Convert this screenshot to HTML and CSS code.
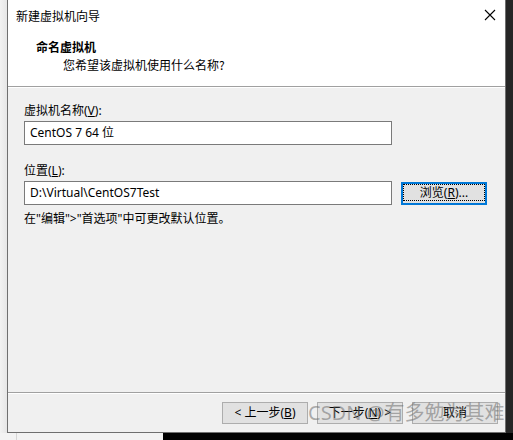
FILE: index.html
```html
<!DOCTYPE html>
<html lang="zh-CN">
<head>
    <meta charset="UTF-8">
    <title>新建虚拟机向导</title>
    <link rel="stylesheet" href="styles.css">
</head>
<body>
    <div class="desktop">
        <div class="main-row">
            <div class="gutter-left"></div>
            <div class="dialog">
                <div class="titlebar">
                    <span class="title">新建虚拟机向导</span>
                    <svg class="close" width="12" height="12" viewBox="0 0 12 12">
                        <path d="M1 1 L11 11 M11 1 L1 11" stroke="#000" stroke-width="1.1" fill="none"/>
                    </svg>
                </div>
                <div class="header">
                    <div class="step-title">命名虚拟机</div>
                    <div class="step-desc">您希望该虚拟机使用什么名称?</div>
                </div>
                <div class="content">
                    <div class="label">虚拟机名称(<u>V</u>):</div>
                    <div class="input">CentOS 7 64 位</div>
                    <div class="label label-gap">位置(<u>L</u>):</div>
                    <div class="row">
                        <div class="input">D:\Virtual\CentOS7Test</div>
                        <div class="btn btn-focus"><span class="focus-ring">浏览(<u>R</u>)...</span></div>
                    </div>
                    <div class="note">在"编辑"&gt;"首选项"中可更改默认位置。</div>
                </div>
                <div class="footer">
                    <div class="btn">&lt; 上一步(<u>B</u>)</div>
                    <div class="btn">下一步(<u>N</u>) &gt;</div>
                    <div class="btn">取消</div>
                    <div class="watermark">CSDN @有多勉为其难</div>
                </div>
            </div>
            <div class="gutter-right"></div>
        </div>
        <div class="bottom-row">
            <div class="bottom-light"></div>
            <div class="bottom-dark"></div>
        </div>
    </div>
</body>
</html>
```

FILE: styles.css
```css
body {
    margin: 0;
    font-family: "Segoe UI", "Noto Sans", "Noto Sans CJK SC", sans-serif;
    font-size: 12px;
    color: #000;
    background-color: #f0f0f0;
}
.desktop {
    width: 513px;
    height: 440px;
    overflow: hidden;
    display: flex;
    flex-direction: column;
}
.main-row {
    display: flex;
    height: 433px;
}
.gutter-left {
    width: 7px;
    background: linear-gradient(to right, #f2f2f2, #e6e6e6);
}
.gutter-right {
    flex: 1;
    background-color: #262626;
}
.dialog {
    width: 497px;
    border: 1px solid #6f6f6f;
    border-top: none;
    background-color: #f0f0f0;
    display: flex;
    flex-direction: column;
    position: relative;
}
.titlebar {
    height: 30px;
    background-color: #fff;
    display: flex;
    align-items: center;
    justify-content: space-between;
    padding: 0 9px 0 8px;
}
.title {
    font-family: "Noto Sans CJK SC", sans-serif;
}
.close {
    margin-bottom: 1px;
}
.header {
    height: 57px;
    background-color: #fff;
    border-bottom: 1px solid #a0a0a0;
    box-shadow: 0 1px 0 #fff;
    padding: 9px 0 0 28px;
    box-sizing: border-box;
    line-height: 16px;
    font-family: "Noto Sans CJK SC", sans-serif;
}
.step-title {
    font-weight: bold;
}
.step-desc {
    margin-top: 2px;
    padding-left: 27px;
}
.content {
    flex: 1;
    padding: 16px 0 0 16px;
    line-height: 16px;
}
.label-gap {
    margin-top: 18px;
}
.input {
    margin-top: 2px;
    width: 356px;
    height: 22px;
    line-height: 22px;
    padding-left: 5px;
    padding-right: 5px;
    border: 1px solid #7a7a7a;
    background-color: #fff;
}
.row {
    display: flex;
    align-items: flex-start;
}
.row .btn {
    margin: 3px 0 0 9px;
}
.note {
    margin-top: 6px;
}
.btn {
    width: 84px;
    height: 20px;
    line-height: 20px;
    border: 1px solid #adadad;
    background-color: #e1e1e1;
    text-align: center;
}
.btn-focus {
    width: 82px;
    height: 19px;
    border: 2px solid #0078d7;
    padding: 0;
    line-height: 17px;
}
.focus-ring {
    display: block;
    height: 17px;
    margin: 0;
    outline: 1px dotted #000;
    outline-offset: -1px;
}
.footer {
    height: 40px;
    border-top: 1px solid #a0a0a0;
    box-shadow: inset 0 1px 0 #fff;
    box-sizing: border-box;
    display: flex;
    justify-content: flex-end;
    gap: 9px;
    padding: 9px 7px 0 0;
    position: relative;
}
.watermark {
    position: absolute;
    left: 300px;
    top: 8px;
    font-size: 20px;
    line-height: 24px;
    color: rgba(110, 110, 110, 0.55);
    white-space: nowrap;
    font-family: "Noto Sans", "Noto Sans CJK SC", sans-serif;
}
.bottom-row {
    display: flex;
    flex: 1;
}
.bottom-light {
    width: 163px;
    background-color: #f3f3f3;
    background-image: linear-gradient(#d6d6d6, #d6d6d6);
    background-size: 1px 100%;
    background-position: 16px 0;
    background-repeat: no-repeat;
}
.bottom-dark {
    flex: 1;
    background-color: #000;
}
```
